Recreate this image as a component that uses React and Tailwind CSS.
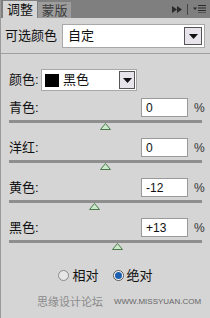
import React from 'react';

const font = { fontFamily: '"Liberation Sans", "Noto Sans CJK SC", sans-serif' };

const Caret = () => (
  <svg width="9" height="5" viewBox="0 0 9 5"><path d="M0 0h9L4.5 5z" fill="#111" /></svg>
);

const Thumb = ({ left }) => (
  <div className="flex" style={{ paddingLeft: left }}>
    <svg width="11" height="7" viewBox="0 0 11 7">
      <path d="M5.5 0.5L10.5 6.5H0.5z" fill="#c9e8c9" stroke="#4c7a4c" strokeWidth="1" />
    </svg>
  </div>
);

const SliderRow = ({ label, value, left }) => (
  <div className="flex flex-col">
    <div className="flex items-center h-[19px]">
      <span className="ml-[8px] text-[13px] text-[#111] w-[132px]">{label}</span>
      <div className="w-[47px] h-[19px] bg-white border border-[#9a9a9a] text-[12px] text-[#111] flex items-center pl-[4px]">{value}</div>
      <span className="ml-[6px] text-[12px] text-[#333]">%</span>
    </div>
    <div className="mt-[3px] mx-[8px] h-[3px] bg-[#8e8e8e]" />
    <Thumb left={left} />
  </div>
);

export default function App() {
  return (
    <div style={font} className="w-[210px] h-[318px] bg-[#d5d5d5] border-l border-[#9a9a9a] flex flex-col">
      <div className="h-[18px] bg-[#7f7f7f] flex items-end justify-between">
        <div className="flex items-end h-full">
          <div className="ml-[2px] w-[34px] h-[17px] bg-[#d5d5d5] text-[13px] text-[#111] flex items-center justify-center leading-none">调整</div>
          <div className="ml-[1px] w-[33px] h-[16px] bg-[#9d9d9d] text-[13px] text-[#3e3e3e] flex items-center justify-center leading-none">蒙版</div>
        </div>
        <div className="flex items-center h-full pr-[4px] gap-[5px]">
          <svg width="10" height="7" viewBox="0 0 10 7"><path d="M0 0l5 3.5L0 7zM5 0l5 3.5L5 7z" fill="#2b2b2b" /></svg>
          <div className="w-[1px] h-[11px] bg-[#444]" />
          <svg width="13" height="8" viewBox="0 0 13 8">
            <path d="M0 2.5h4L2 5z" fill="#2b2b2b" />
            <path d="M5 0.5h8M5 3h8M5 5.5h8M5 8h8" stroke="#2b2b2b" strokeWidth="1.2" />
          </svg>
        </div>
      </div>
      <div className="flex items-center mt-[6px] h-[24px]">
        <span className="ml-[4px] w-[57px] text-[13px] text-[#111]">可选颜色</span>
        <div className="w-[143px] h-[24px] bg-white border border-[#a8a8a8] flex items-center justify-between">
          <span className="ml-[5px] text-[13px] text-[#111]">自定</span>
          <div className="mr-[2px] w-[18px] h-[18px] bg-[#e8e4ec] border border-[#555] flex items-center justify-center">
            <Caret />
          </div>
        </div>
      </div>
      <div className="mt-[5px] h-[1px] bg-[#a0a0a0]" />
      <div className="mt-[15px] flex items-center h-[22px]">
        <span className="ml-[8px] w-[32px] text-[13px] text-[#111]">颜色:</span>
        <div className="w-[96px] h-[22px] bg-white border border-[#a8a8a8] flex items-center justify-between">
          <div className="flex items-center">
            <div className="ml-[3px] w-[14px] h-[13px] bg-black" />
            <span className="ml-[4px] text-[13px] text-[#111]">黑色</span>
          </div>
          <div className="mr-[1px] w-[16px] h-[18px] bg-[#e8e4ec] border border-[#555] flex items-center justify-center">
            <Caret />
          </div>
        </div>
      </div>
      <div className="mt-[7px] flex flex-col gap-[8px]">
        <SliderRow label="青色:" value="0" left={99} />
        <SliderRow label="洋红:" value="0" left={99} />
        <SliderRow label="黄色:" value="-12" left={88} />
        <SliderRow label="黑色:" value="+13" left={111} />
      </div>
      <div className="mt-[16px] flex items-center justify-center gap-[14px] text-[13px] text-[#111]">
        <label className="flex items-center gap-[3px]">
          <span className="w-[11px] h-[11px] rounded-full border border-[#8a8a8a] bg-[#e6e6e6]" />
          相对
        </label>
        <label className="flex items-center gap-[3px]">
          <span className="w-[11px] h-[11px] rounded-full border border-[#555] bg-white flex items-center justify-center">
            <span className="w-[7px] h-[7px] rounded-full bg-[#1c5fb0]" />
          </span>
          绝对
        </label>
      </div>
      <div className="mt-[8px] flex items-center whitespace-nowrap">
        <span className="ml-[36px] shrink-0 text-[11px] text-[#8a8a8a]">思缘设计论坛</span>
        <span className="ml-[11px] shrink-0 text-[8px] text-[#666]">WWW.MISSYUAN.COM</span>
      </div>
    </div>
  );
}
